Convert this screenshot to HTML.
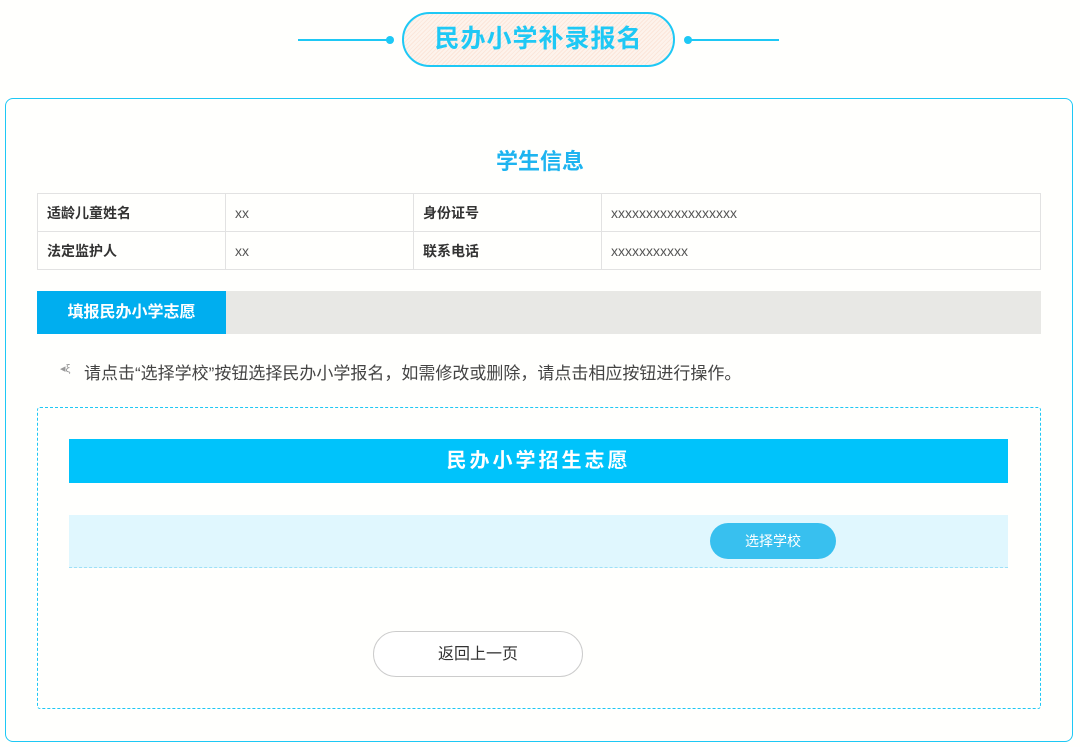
<!DOCTYPE html>
<html><head><meta charset="utf-8"><style>
*{margin:0;padding:0;box-sizing:border-box}
body{width:1080px;height:747px;background:#fffffd;position:relative;overflow:hidden;font-family:"Liberation Sans","Noto Sans CJK SC",sans-serif;color:#333}
.a{position:absolute}
.line{height:2px;background:#1ec8f5}
.dot{width:8px;height:8px;border-radius:50%;background:#1ec8f5}
.pill{left:402px;top:12px;width:273px;height:55px;border:2px solid #1ec8f5;border-radius:28px;background:repeating-linear-gradient(135deg,#fdf3ec 0 2px,#fbe6da 2px 3px);color:#1ec8f5;font-size:25px;font-weight:bold;text-align:center;line-height:51px;letter-spacing:1px}
.box{left:5px;top:98px;width:1068px;height:644px;border:1.5px solid #1ec8f5;border-radius:8px}
table{position:absolute;left:37px;top:193px;width:1004px;border-collapse:collapse;font-size:14px}
td{border:1px solid #e2e2e2;height:38px;padding-left:9px}
td.l{font-weight:bold;color:#333}
td.v{color:#555}
</style></head><body>
<div class="a line" style="left:298px;top:39px;width:92px"></div>
<div class="a dot" style="left:386px;top:36px"></div>
<div class="a pill">民办小学补录报名</div>
<div class="a dot" style="left:684px;top:36px"></div>
<div class="a line" style="left:688px;top:39px;width:91px"></div>
<div class="a box"></div>
<div class="a" style="left:0;width:1080px;top:144px;text-align:center;font-size:22px;font-weight:bold;color:#1eb4f0">学生信息</div>
<table>
<tr><td class="l" style="width:188px">适龄儿童姓名</td><td class="v" style="width:188px">xx</td><td class="l" style="width:188px">身份证号</td><td class="v">xxxxxxxxxxxxxxxxxx</td></tr>
<tr><td class="l">法定监护人</td><td class="v">xx</td><td class="l">联系电话</td><td class="v">xxxxxxxxxxx</td></tr>
</table>
<div class="a" style="left:37px;top:291px;width:1004px;height:43px;background:#e8e8e5"></div>
<div class="a" style="left:37px;top:291px;width:189px;height:43px;background:#00aeef;color:#fff;font-weight:bold;font-size:16px;text-align:center;line-height:43px">填报民办小学志愿</div>
<div class="a" style="left:60px;top:362px;font-size:11px;color:#999">◂ξ</div>
<div class="a" style="left:84px;top:359px;font-size:17px;color:#444">请点击“选择学校”按钮选择民办小学报名，如需修改或删除，请点击相应按钮进行操作。</div>
<div class="a" style="left:37px;top:407px;width:1004px;height:302px;border:1px dashed #1ec8f5;border-radius:3px"></div>
<div class="a" style="left:69px;top:439px;width:939px;height:44px;background:#00c3fb;color:#fff;font-weight:bold;font-size:20px;text-align:center;line-height:44px;letter-spacing:3px">民办小学招生志愿</div>
<div class="a" style="left:69px;top:515px;width:939px;height:53px;background:#e0f7fe;border-bottom:1px dashed #9ee0f7"></div>
<div class="a" style="left:710px;top:523px;width:126px;height:36px;border-radius:18px;background:#38c0ef;color:#fff;font-size:14px;text-align:center;line-height:36px">选择学校</div>
<div class="a" style="left:373px;top:631px;width:210px;height:46px;border:1px solid #ccc;border-radius:23px;background:#fff;font-size:16px;text-align:center;line-height:46px;color:#333">返回上一页</div>
</body></html>
